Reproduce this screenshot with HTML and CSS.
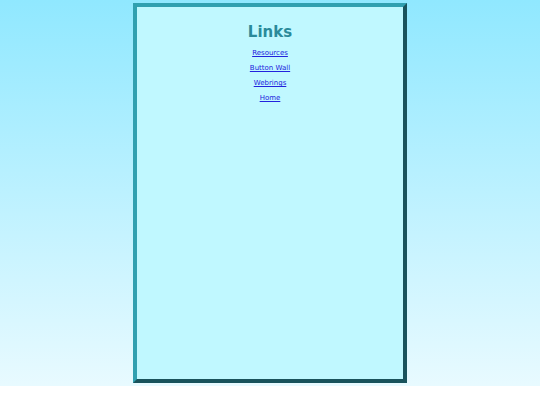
FILE: index.html
```html
<!DOCTYPE html>
<html>
<head>
<meta charset="utf-8">
<title>Links</title>
<link rel="stylesheet" href="styles.css">
</head>
<body>
<div class="page">
  <div class="box">
    <h1 class="title">Links</h1>
    <ul class="links">
      <li><a href="#">Resources</a></li>
      <li><a href="#">Button Wall</a></li>
      <li><a href="#">Webrings</a></li>
      <li><a href="#">Home</a></li>
    </ul>
  </div>
</div>
</body>
</html>
```
FILE: styles.css
```css
html, body {
  margin: 0;
  padding: 0;
  background: #ffffff;
}
.page {
  background: linear-gradient(to bottom, #90e8ff 0%, #e8faff 100%);
  padding: 3px 0 3px;
  font-family: "DejaVu Sans", Verdana, sans-serif;
}
.box {
  width: 266px;
  height: 372px;
  margin: 0 auto;
  border: 4px outset #30a0b0;
  background: #c0f8ff;
  box-sizing: content-box;
}
.title {
  margin: 15px 0 0;
  font-size: 15px;
  line-height: 20px;
  color: #2a8a9a;
  text-align: center;
  font-weight: bold;
}
.links {
  list-style: none;
  margin: 4px 0 0;
  padding: 0;
  text-align: center;
}
.links li {
  font-size: 7px;
  line-height: 15px;
}
.links a {
  color: #2222dd;
}
```
